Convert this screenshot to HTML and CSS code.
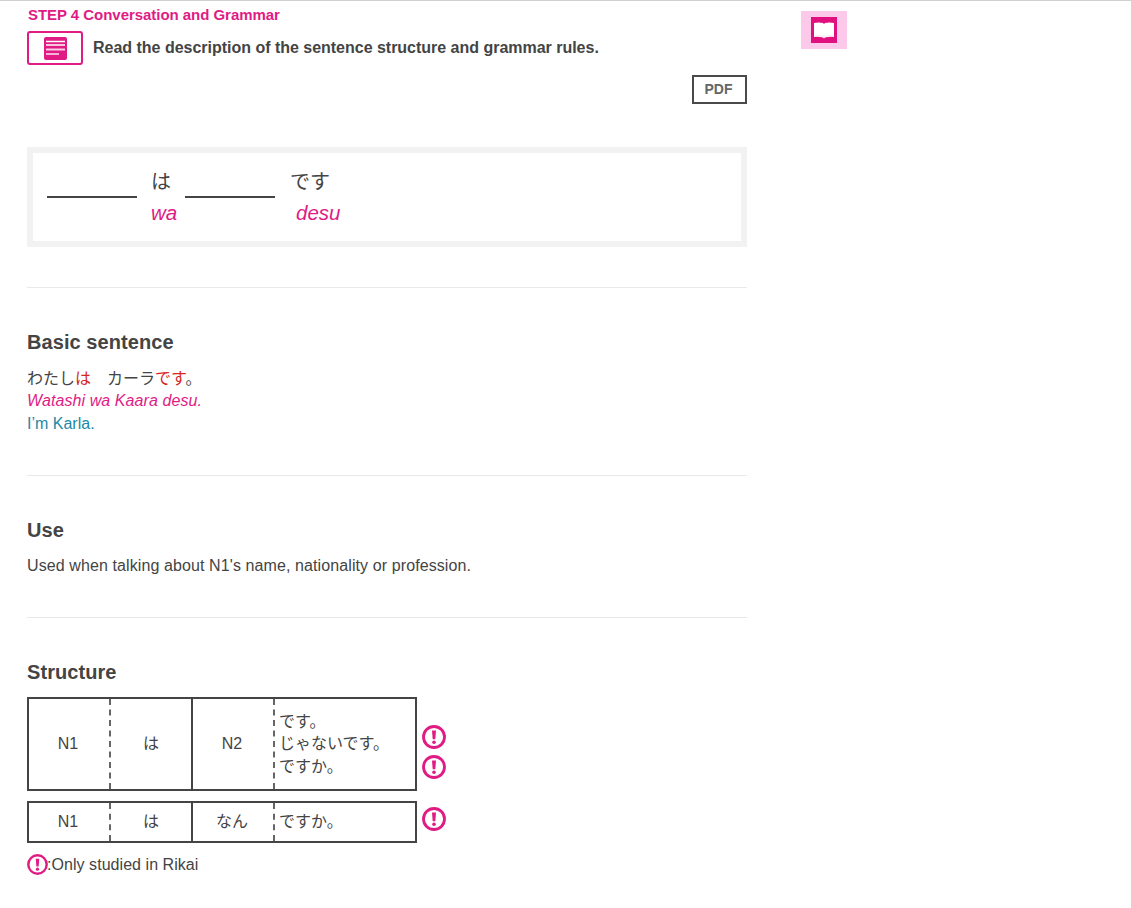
FILE: index.html
```html
<!DOCTYPE html>
<html lang="en">
<head>
<meta charset="utf-8">
<title>STEP 4 Conversation and Grammar</title>
<link rel="stylesheet" href="styles.css">
</head>
<body>
<div class="page">
  <main class="main">
    <div class="step">STEP 4 Conversation and Grammar</div>
    <div class="intro">
      <span class="intro-btn">
        <svg width="23" height="23" viewBox="0 0 23 23"><rect width="23" height="23" rx="2" fill="#e01b84"/><path d="M2 4.500h19M2 8h19" stroke="#fff" stroke-width="1.500"/><path d="M2 12.500h19" stroke="#fbd0e6" stroke-width="2"/><path d="M2 17h13" stroke="#fde6f2" stroke-width="1.500"/></svg>
      </span>
      <b class="intro-text">Read the description of the sentence structure and grammar rules.</b>
    </div>
    <div class="pdf-row"><span class="pdf">PDF</span></div>
    <div class="pattern">
      <div class="slot"></div>
      <div class="word wa"><span class="jp">は</span><i>wa</i></div>
      <div class="slot"></div>
      <div class="word desu"><span class="jp">です</span><i>desu</i></div>
    </div>
    <hr class="rule rule-first">
    <section class="sec">
      <h2>Basic sentence</h2>
      <div class="lines">
        <div class="jp">わたし<span class="red">は</span>　カーラ<span class="red">です</span>。</div>
        <div class="romaji">Watashi wa Kaara desu.</div>
        <div class="trans">I’m Karla.</div>
      </div>
    </section>
    <hr class="rule rule-second">
    <section class="sec">
      <h2>Use</h2>
      <p class="use">Used when talking about N1's name, nationality or profession.</p>
    </section>
    <hr class="rule rule-third">
    <section class="sec">
      <h2 class="struct-title">Structure</h2>
      <div class="struct">
        <div class="cells cells-tall">
          <div class="cell dash">N1</div>
          <div class="cell solid jp">は</div>
          <div class="cell dash">N2</div>
          <div class="cell last jp"><span>です。</span><span>じゃないです。</span><span>ですか。</span></div>
        </div>
        <div class="marks marks-tall">
          <svg class="mark"><use href="#excl"/></svg>
          <svg class="mark"><use href="#excl"/></svg>
        </div>
      </div>
      <div class="struct struct-short">
        <div class="cells cells-short">
          <div class="cell dash">N1</div>
          <div class="cell solid jp">は</div>
          <div class="cell dash jp nan">なん</div>
          <div class="cell last jp">ですか。</div>
        </div>
        <div class="marks marks-short">
          <svg class="mark"><use href="#excl"/></svg>
        </div>
      </div>
      <div class="note"><svg class="mark mark-note"><use href="#excl"/></svg><span>:Only studied in Rikai</span></div>
    </section>
  </main>
  <aside class="side">
    <span class="book">
      <span class="book-in">
        <svg width="20" height="17" viewBox="0 0 20 17"><path d="M0 1Q5 0 9 1L10 2L11 1Q15 0 20 1V15Q15 14.500 11 15.500L10 16.500L9 15.500Q5 14.500 0 15Z" fill="#fff"/><path d="M1 14Q6 13.200 10 14.500Q14 13.200 19 14" fill="none" stroke="#fbd0e6" stroke-width=".6"/></svg>
      </span>
    </span>
  </aside>
</div>
<svg class="defs" width="0" height="0">
  <symbol id="excl" viewBox="0 0 24 24">
    <circle cx="12" cy="12" r="10.500" fill="none" stroke="#e01b84" stroke-width="2.800"/>
    <path d="M10 5.500h4l-.7 8.800h-2.600z" fill="#e01b84"/>
    <circle cx="12" cy="17.300" r="1.800" fill="#e01b84"/>
  </symbol>
</svg>
</body>
</html>
```
FILE: styles.css
```css
* { box-sizing: border-box; }
html, body { margin: 0; padding: 0; }
body {
  border-top: 1px solid #d0d0d0;
  background: #fff;
  color: #444;
  font-family: "Liberation Sans", "Noto Sans CJK JP", sans-serif;
  font-size: 16px;
  line-height: 22.500px;
}
.page { display: flex; align-items: flex-start; padding-left: 27px; }
.main { width: 720px; flex: none; }
.side { margin-left: 54px; padding-top: 10px; }
.defs { position: absolute; }

.step { color: #e01b84; font-size: 15px; font-weight: bold; line-height: 16px; margin: 6px 0 0 1px; letter-spacing: -0.04px; }
.intro { display: flex; align-items: center; margin-top: 8px; }
.intro-btn {
  width: 56px; height: 34px; border: 2px solid #e01b84; border-radius: 3px;
  display: flex; align-items: center; justify-content: center;
}
.intro-text { margin-left: 10px; color: #444; letter-spacing: -0.015px; }
.pdf-row { display: flex; justify-content: flex-end; margin-top: 10px; }
.pdf {
  width: 55px; height: 29px; border: 2px solid #4a4a4a; color: #666;
  font-size: 14px; font-weight: bold; line-height: 25px; text-align: center; padding-right: 2px;
}

.pattern {
  display: flex; margin-top: 43px; height: 100px; border: 6px solid #f2f2f2;
  padding: 14px 0 0 14px; align-items: flex-start;
}
.slot { width: 90px; height: 31px; border-bottom: 2px solid #444; }
.word { display: flex; flex-direction: column; font-size: 20px; line-height: 24px; }
.word .jp { padding-top: 3px; }
.word i { color: #e01b84; margin-top: 7px; font-size: 20.500px; }
.wa { margin: 0 14px; width: 20px; white-space: nowrap; }
.desu { margin-left: 15px; }
.desu i { margin-left: 6px; }

.rule { border: 0; border-top: 1px solid #e8e8e8; margin: 0; }
.rule-first { margin-top: 40px; }
.rule-second { margin-top: 40px; }
.rule-third { margin-top: 39px; }
.sec { padding-top: 41px; }
h2 { margin: 0; font-size: 20px; line-height: 26px; font-weight: bold; color: #444; letter-spacing: 0.07px; }
.lines { margin-top: 12.500px; }
.red { color: #d8261c; }
.romaji { color: #e01b84; font-style: italic; letter-spacing: 0.09px; }
.trans { color: #1a8aa8; }
.use { margin: 12px 0 0; letter-spacing: 0.1px; }

.struct-title { margin-bottom: 12px; }
.struct { display: flex; align-items: stretch; }
.struct-short { margin-top: 10px; }
.cells { width: 390px; border: 2px solid #444; display: grid; grid-template-columns: 82px 82px 82px 1fr; }
.cells-tall { height: 94px; }
.cells-short { height: 42px; }
.cell { display: flex; align-items: center; justify-content: center; padding-top: 2px; }
.dash { border-right: 2px dashed #666; padding-right: 2px; }
.solid { border-right: 2px solid #444; }
.last { flex-direction: column; align-items: flex-start; padding-left: 4px; }
.marks { display: flex; flex-direction: column; margin-left: 5px; }
.marks-tall { padding-top: 28px; gap: 6px; }
.marks-short { padding-top: 6px; }
.mark { width: 24px; height: 24px; display: block; }
.note { display: flex; align-items: center; margin-top: 11px; letter-spacing: 0.05px; }
.mark-note { width: 21px; height: 21px; margin-right: -1px; }

.book { display: block; width: 46px; height: 38px; background: #fdc9ea; padding: 6px 10px; }
.book-in { width: 26px; height: 26px; background: #e0107f; display: flex; align-items: center; justify-content: center; }
```
